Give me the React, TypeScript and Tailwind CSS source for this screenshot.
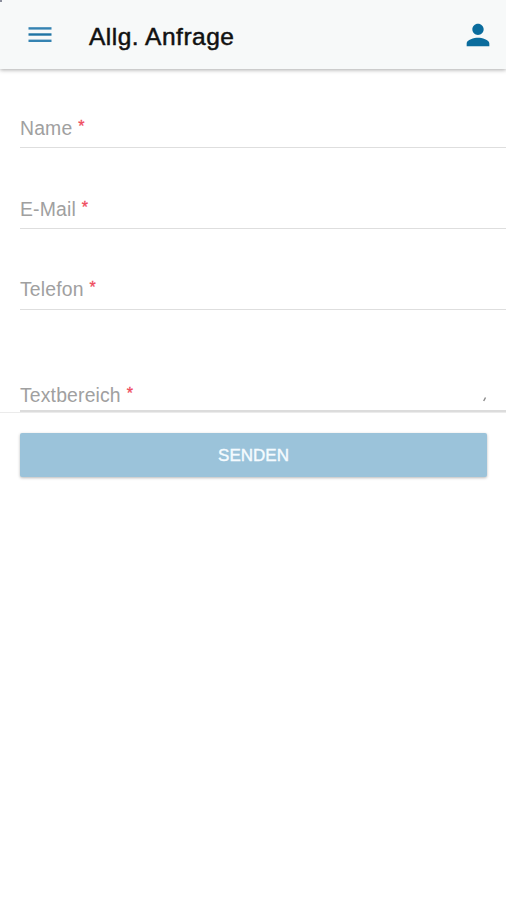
import { useState } from "react";

const fields = [
  { name: "name", label: "Name", type: "text", height: "h-[79px] pb-[7px]" },
  { name: "email", label: "E-Mail", type: "email", height: "h-[81px] pb-[7px]" },
  { name: "phone", label: "Telefon", type: "tel", height: "h-[81px] pb-2" },
];

function MenuIcon() {
  return (
    <svg viewBox="0 0 24 16" className="h-4 w-6" fill="#3583b2">
      <rect x="0.5" y="0.2" width="23" height="2.4" />
      <rect x="0.5" y="6.3" width="23" height="2.4" fill="#1f74a4" />
      <rect x="0.5" y="12.6" width="23" height="2.4" />
    </svg>
  );
}

function PersonIcon() {
  return (
    <svg viewBox="0 0 24 24" className="h-[34px] w-[34px]" fill="#0a6c9d">
      <path d="M12 12c2.21 0 4-1.79 4-4s-1.79-4-4-4-4 1.79-4 4 1.79 4 4 4zm0 2c-2.67 0-8 1.34-8 4v2h16v-2c0-2.66-5.33-4-8-4z" />
    </svg>
  );
}

function Label({ text }: { text: string }) {
  return (
    <span className="flex text-[19.4px] leading-6 tracking-[0.15px] text-[#a0a0a0]">
      {text}
      <span className="ml-[6px] text-[16px] leading-[22px] text-[#ef4a5c] [-webkit-text-stroke:0.3px_#ef4a5c]">*</span>
    </span>
  );
}

export default function App() {
  const [active, setActive] = useState("");

  return (
    <div className="flex h-[900px] w-[506px] flex-col overflow-hidden bg-white font-['Liberation_Sans',Arial,sans-serif]">
      {/* Toolbar */}
      <header className="relative flex h-[69px] shrink-0 items-center bg-[#f7f9f9] pl-[28px] pr-[11px] pt-px shadow-[0_1px_4px_rgba(0,0,0,0.34)]">
        <span className="absolute left-0 top-0 h-[2px] w-[2px] bg-[#8b8e9c]" />
        <button aria-label="Menu">
          <MenuIcon />
        </button>
        <h1 className="ml-[37px] mt-[3px] text-[24.5px] leading-8 tracking-[0.5px] text-[#111] [-webkit-text-stroke:0.5px_#111]">
          Allg. Anfrage
        </h1>
        <button aria-label="Profil" className="ml-auto">
          <PersonIcon />
        </button>
      </header>

      {/* Form */}
      <form className="flex flex-col" onSubmit={(e) => e.preventDefault()}>
        <div className="flex flex-col pl-5">
          {fields.map((field) => (
            <label
              key={field.name}
              onClick={() => setActive(field.name)}
              className={`flex items-end border-b border-[#dedede] ${field.height}`}
            >
              <Label text={field.label} />
              {active === field.name && (
                <input type={field.type} name={field.name} className="ml-2 flex-1 outline-none" autoFocus />
              )}
            </label>
          ))}
          <div className="flex h-[102px] items-end justify-between border-b-2 border-[#dcdcdc] pb-[3px] pr-[19px]">
            <Label text="Textbereich" />
            <svg viewBox="0 0 6 6" className="mb-[5px] h-[6px] w-[6px]" stroke="#888" strokeWidth="1.4">
              <path d="M2.7 5L4.5 1.5" />
            </svg>
          </div>
        </div>
        <div className="border-t border-[#ebebeb] px-5 pt-5">
          <button className="h-11 w-[467px] rounded-[2px] bg-[#9bc3da] pt-px text-[17px] leading-5 text-[#f5fbff] shadow-[0_1px_3px_rgba(0,0,0,0.28)] [-webkit-text-stroke:0.4px_#f5fbff]">
            SENDEN
          </button>
        </div>
      </form>
    </div>
  );
}
